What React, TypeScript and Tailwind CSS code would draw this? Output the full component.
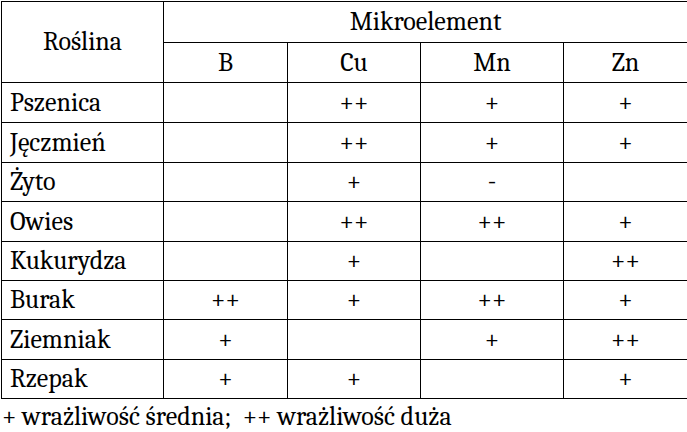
import { Fragment } from "react";

const rows: [string, string, string, string, string][] = [
  ["Pszenica", "", "++", "+", "+"],
  ["Jęczmień", "", "++", "+", "+"],
  ["Żyto", "", "+", "-", ""],
  ["Owies", "", "++", "++", "+"],
  ["Kukurydza", "", "+", "", "++"],
  ["Burak", "++", "+", "++", "+"],
  ["Ziemniak", "+", "", "+", "++"],
  ["Rzepak", "+", "+", "", "+"],
];

const cell = "border-l border-t border-black flex items-center justify-center";

const App = () => {
  return (
    <div className="w-[687px] h-[432px] bg-white text-black font-serif text-[26px] leading-none">
      <div className="ml-[1px] mt-[1px] w-[686px] grid grid-cols-[162px_124px_133px_143px_124px] grid-rows-[41px_40px_40px_40px_39px_40px_39px_39px_40px_39px] border-b border-black">
        <div className={`${cell} row-span-2`}>Roślina</div>
        <div className={`${cell} col-span-4`}>Mikroelement</div>
        <div className={cell}>B</div>
        <div className={cell}>Cu</div>
        <div className={cell}>Mn</div>
        <div className={cell}>Zn</div>
        {rows.map((r) => (
          <Fragment key={r[0]}>
            <div className="border-l border-t border-black flex items-center pl-[8px]">{r[0]}</div>
            <div className={cell}>{r[1]}</div>
            <div className={cell}>{r[2]}</div>
            <div className={cell}>{r[3]}</div>
            <div className={cell}>{r[4]}</div>
          </Fragment>
        ))}
      </div>
      <div className="pl-[2px] pt-[5px] whitespace-pre">+ wrażliwość średnia;  ++ wrażliwość duża</div>
    </div>
  );
};

export default App;
